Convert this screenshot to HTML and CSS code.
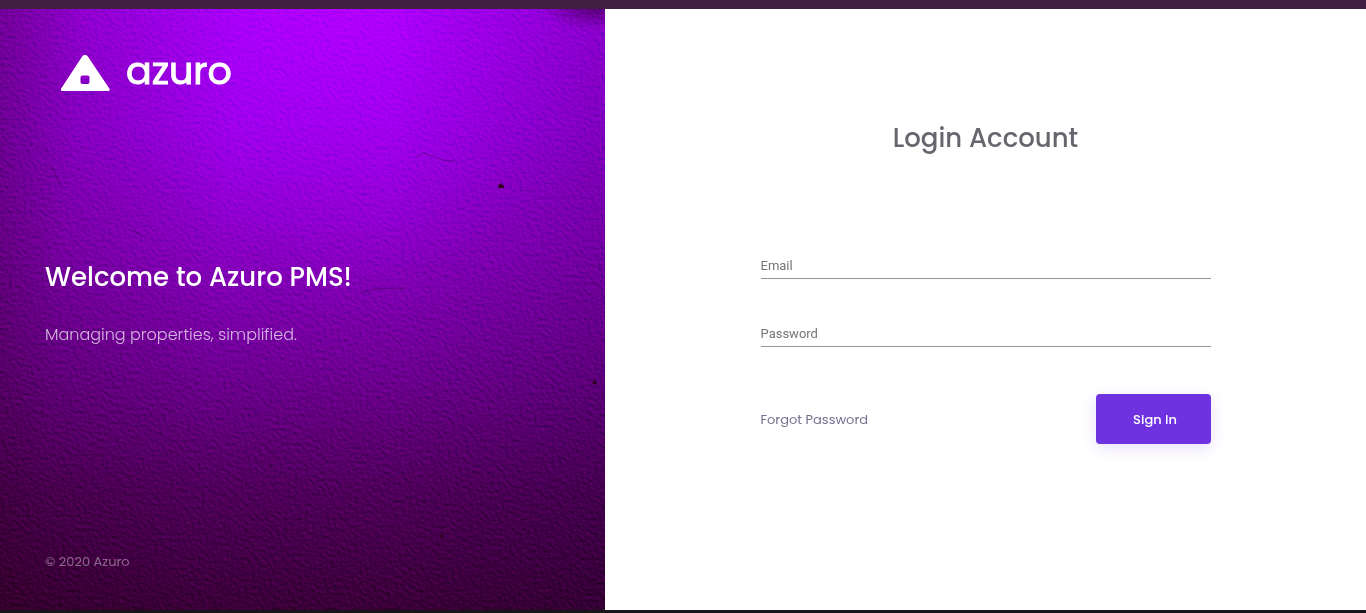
FILE: index.html
```html
<!DOCTYPE html>
<html lang="en">
<head>
  <meta charset="utf-8">
  <meta name="viewport" content="width=device-width, initial-scale=1">
  <title>Azuro PMS</title>
  <link rel="stylesheet" href="styles.css">
</head>
<body>
  <div class="page">
    <aside class="aside">
      <svg class="wall" viewBox="0 0 605 601" preserveAspectRatio="none" aria-hidden="true">
        <defs>
          <linearGradient id="base" x1="0" y1="0" x2="0" y2="1">
            <stop offset="0" stop-color="#a800fa"/>
            <stop offset=".2" stop-color="#9a00e6"/>
            <stop offset=".4" stop-color="#8800c2"/>
            <stop offset=".6" stop-color="#6e0094"/>
            <stop offset=".8" stop-color="#4e005a"/>
            <stop offset="1" stop-color="#380036"/>
          </linearGradient>
          <linearGradient id="left" x1="0" y1="0" x2="1" y2=".08">
            <stop offset="0" stop-color="#200008" stop-opacity=".4"/>
            <stop offset=".14" stop-color="#200008" stop-opacity=".17"/>
            <stop offset=".4" stop-color="#200008" stop-opacity="0"/>
          </linearGradient>
          <linearGradient id="right" x1="0" y1="0" x2="1" y2="0">
            <stop offset=".65" stop-color="#180020" stop-opacity="0"/>
            <stop offset="1" stop-color="#180020" stop-opacity=".2"/>
          </linearGradient>
          <radialGradient id="glow" cx=".57" cy="0" r=".45">
            <stop offset="0" stop-color="#b800ff" stop-opacity=".6"/>
            <stop offset="1" stop-color="#a800ff" stop-opacity="0"/>
          </radialGradient>
          <radialGradient id="corner">
            <stop offset="0" stop-color="#300038" stop-opacity=".7"/>
            <stop offset="1" stop-color="#500070" stop-opacity="0"/>
          </radialGradient>
          <filter id="plaster" x="0" y="0" width="100%" height="100%" color-interpolation-filters="sRGB">
            <feTurbulence type="fractalNoise" baseFrequency=".28" numOctaves="4" seed="21" result="n"/>
            <feDiffuseLighting in="n" surfaceScale="1.3" diffuseConstant=".72" lighting-color="#fff">
              <feDistantLight azimuth="300" elevation="45"/>
            </feDiffuseLighting>
          </filter>
        </defs>
        <rect width="605" height="601" fill="url(#base)"/>
        <rect width="605" height="601" fill="url(#glow)"/>
        <rect width="605" height="601" fill="url(#left)"/>
        <rect width="605" height="601" fill="url(#right)"/>
        <ellipse cx="594" cy="-4" rx="56" ry="26" fill="url(#corner)"/>
        <rect class="grain" width="605" height="601" filter="url(#plaster)"/>
        <g class="cracks">
          <path d="M415 149l8-5 9 3 10 4 13 1M360 284l17-4 29-1M43 137l7 8M50 155l12 24M133 221l10 6M182 566l20 5M220 575l10 10M242 567l14-1M258 579q14-2 17 14"/>
        </g>
        <path class="pit" d="M498 178l2-4 4 3v2h-5zM592 374l3-3 2 3-2 2zM439 527l4-2v4z"/>
      </svg>
      <div class="aside-content">
        <a class="brand" href="#">
          <svg class="brand-mark" viewBox="0 0 50 37" aria-hidden="true">
            <path fill="#fff" fill-rule="evenodd" d="M22.300 1.200Q25-1.800 27.700 1.200L49.300 33.600Q50.500 36 48 36H2.500Q0 36 1.200 33.600ZM22.300 20.500Q20.500 20.500 20.500 22.300V27.200Q20.500 29 22.300 29H27.700Q29.500 29 29.500 27.200V22.300Q29.500 20.500 27.700 20.500Z"/>
          </svg>
          <span class="brand-name">azuro</span>
        </a>
        <div class="intro">
          <h1 class="welcome">Welcome to Azuro PMS!</h1>
          <p class="tagline">Managing properties, simplified.</p>
        </div>
        <footer class="copyright">© 2020 Azuro</footer>
      </div>
    </aside>
    <main class="main">
      <form class="login">
        <h2 class="title">Login Account</h2>
        <input class="field" type="email" name="email" placeholder="Email" aria-label="Email">
        <input class="field" type="password" name="password" placeholder="Password" aria-label="Password">
        <div class="actions">
          <a class="forgot" href="#">Forgot Password</a>
          <button class="submit" type="submit">Sign In</button>
        </div>
      </form>
    </main>
  </div>
</body>
</html>
```
FILE: styles.css
```css
* {
  box-sizing: border-box;
}

body {
  margin: 0;
  font-family: Poppins, Inter, "Open Sans", sans-serif;
  font-size: 13px;
  line-height: 20px;
}

.page {
  display: grid;
  grid-template-columns: 605fr 761fr;
  min-height: 100vh;
  border-top: 9px solid #411f42;
  border-bottom: 3px solid #17151a;
}

.aside {
  position: relative;
  display: flex;
  overflow: hidden;
  background: #68008f;
}

.wall {
  position: absolute;
  inset: 0;
  width: 100%;
  height: 100%;
}

.grain {
  mix-blend-mode: soft-light;
  opacity: .8;
}

.cracks {
  fill: none;
  stroke: #30003c;
  stroke-width: 1;
  opacity: .4;
}

.pit {
  fill: #30001c;
}

.aside-content {
  position: relative;
  flex: 1;
  display: flex;
  flex-direction: column;
  justify-content: space-between;
  padding: 36px 45px 38px;
  color: #fff;
}

.brand {
  display: flex;
  align-items: center;
  gap: 16px;
  padding: 0 15px;
  color: #fff;
  text-decoration: none;
}

.brand-mark {
  width: 50px;
  height: 37px;
  margin-top: 6px;
}

.brand-name {
  padding-top: 2px;
  font-size: 38px;
  line-height: 48px;
  -webkit-text-stroke: 1px #fff;
}

.intro {
  padding-bottom: 44px;
}

.welcome {
  margin: 0 0 26px;
  font-size: 26px;
  font-weight: 500;
  line-height: 40px;
}

.tagline {
  margin: 0;
  font-size: 16px;
  font-weight: 300;
  line-height: 24px;
  opacity: .7;
}

.copyright {
  opacity: .4;
}

.main {
  padding: 109px 24px 48px;
  background: #fff;
}

.login {
  display: flex;
  flex-direction: column;
  max-width: 450px;
  margin: 0 auto;
}

.title {
  margin: 0 0 83px;
  color: #67666e;
  font-size: 26px;
  font-weight: 500;
  line-height: 40px;
  text-align: center;
}

.field {
  width: 100%;
  height: 38px;
  margin-bottom: 30px;
  padding: 12px 0 0;
  border: 0;
  border-bottom: 1px solid #949494;
  border-radius: 0;
  outline: 0;
  background: none;
  color: #444;
  font: 13px/20px Roboto, sans-serif;
}

.field::placeholder {
  color: #757575;
  opacity: 1;
}

.actions {
  display: flex;
  align-items: center;
  justify-content: space-between;
  margin-top: 17px;
}

.forgot {
  padding-top: 2px;
  color: #74708d;
  text-decoration: none;
}

.submit {
  width: 115px;
  height: 50px;
  padding: 2px 0 0 4px;
  border: 0;
  border-radius: 4px;
  background: #6e32e0;
  box-shadow: 0 4px 16px rgba(110, 50, 224, .15);
  color: #fff;
  font: inherit;
  font-weight: 500;
}
```
